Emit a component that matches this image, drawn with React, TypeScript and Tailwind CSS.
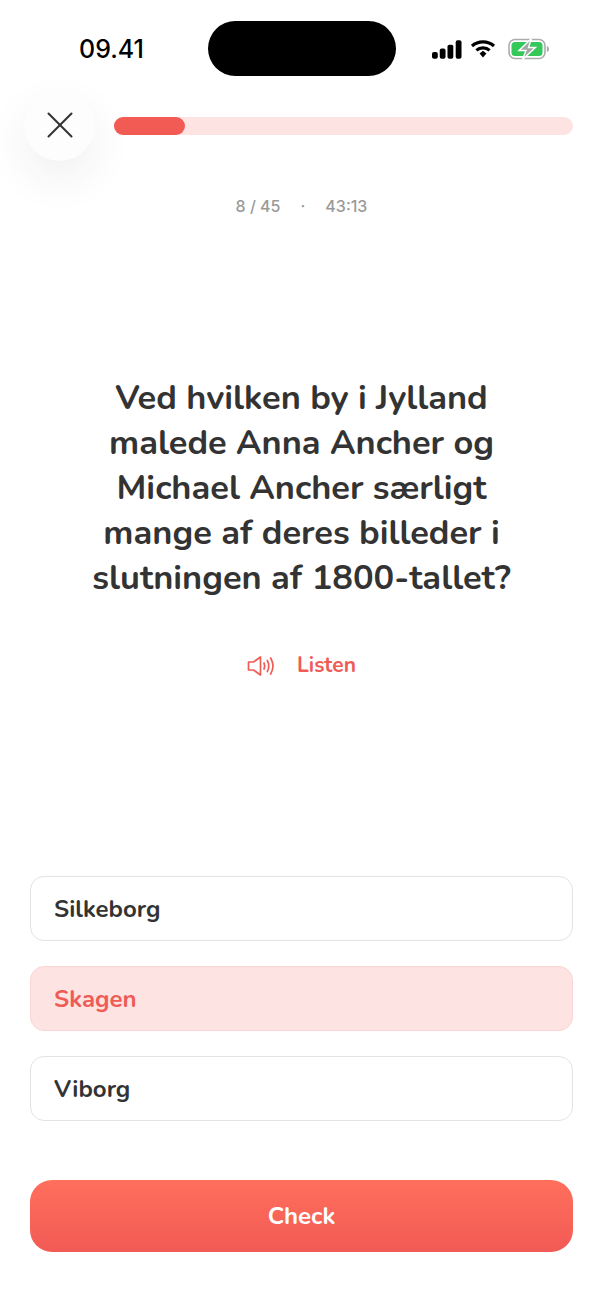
import React from 'react';
import { X } from 'lucide-react';

const answers = [
  { label: 'Silkeborg', active: false },
  { label: 'Skagen', active: true },
  { label: 'Viborg', active: false },
];

const StatusIcons = () => (
  <div className="flex items-center gap-[8px]">
    <svg width="30" height="19" viewBox="0 0 31 19" fill="#000">
      <rect x="0" y="12" width="6" height="7" rx="2" />
      <rect x="8" y="8.5" width="6" height="10.5" rx="2" />
      <rect x="16" y="4.5" width="6" height="14.5" rx="2" />
      <rect x="24.5" y="0" width="6" height="19" rx="2" />
    </svg>
    <svg width="26" height="20" viewBox="0 0 26 20" fill="none" stroke="#000" strokeWidth="3.2">
      <path d="M2 7 C8 1.4 18 1.4 24 7" />
      <path d="M6.4 11.4 C10 8 16 8 19.6 11.4" />
      <path d="M9.6 14.6 L13 11.8 L16.4 14.6 L13 18.4 Z" fill="#000" stroke="none" />
    </svg>
    <svg width="42" height="22" viewBox="0 0 42 22" className="ml-[4px]">
      <rect x="1" y="1.5" width="36" height="19" rx="6" fill="none" stroke="#a9aeaa" strokeWidth="1.6" />
      <rect x="3.5" y="4" width="31" height="14" rx="3.5" fill="#34c759" />
      <path d="M38.8 8 C40.5 8.5 41 9.5 41 11 C41 12.5 40.5 13.5 38.8 14 Z" fill="#a9aeaa" />
      <path d="M23.5 0.5 L11 12.5 H18 L14.5 21.5 L27.5 9.5 H20.5 Z" fill="#a4a6a5" stroke="#fff" strokeWidth="1.4" />
    </svg>
  </div>
);

const SpeakerIcon = () => (
  <svg width="28" height="22" viewBox="0 0 28 22" fill="none" stroke="#ee5c56" strokeWidth="1.7" strokeLinecap="round" strokeLinejoin="round">
    <path d="M1.5 7 H6.5 L13.5 2 V20 L6.5 15 H1.5 Z" />
    <path d="M17 8 C18 10 18 12 17 14" />
    <path d="M20.3 5.5 C22.2 9 22.2 13 20.3 16.5" />
    <path d="M23.6 3 C26.6 8 26.6 14 23.6 19" />
  </svg>
);

export default function App() {
  return (
    <div className="w-[603px] h-[1311px] bg-white flex flex-col overflow-hidden font-['Nunito','Noto_Sans',sans-serif]">
      {/* Status bar */}
      <div className="h-[90px] pt-[21px] pl-[79px] pr-[53px] flex items-start shrink-0">
        <span className="w-[129px] h-[57px] flex items-center font-['Inter',sans-serif] font-medium text-[25px] text-black">09.41</span>
        <div className="w-[188px] h-[55px] rounded-[28px] bg-black" />
        <div className="ml-auto h-[56px] flex items-center">
          <StatusIcons />
        </div>
      </div>

      {/* Progress */}
      <div className="pl-[24px] pr-[30px] flex items-center gap-[19px] shrink-0">
        <button className="w-[71px] h-[71px] rounded-full bg-[#fdfdfd] flex items-center justify-center shadow-[0_18px_44px_rgba(40,40,40,0.07)]">
          <X size={46} strokeWidth={1.05} color="#333333" className="-mt-[1px]" />
        </button>
        <div className="flex-1 h-[18px] rounded-full bg-[#fde4e2]">
          <div className="w-[71px] h-full rounded-full bg-[#f25a54]" />
        </div>
      </div>

      <div className="mt-[35px] h-[20px] flex items-center justify-center font-['Inter',sans-serif] font-medium text-[16px] text-[#9a9a9a]">
        <span>8 / 45</span>
        <span className="mx-[20px]">·</span>
        <span>43:13</span>
      </div>

      {/* Question */}
      <h1 className="mt-[159px] px-[85px] text-center font-bold text-[34.4px] leading-[45px] text-[#333333]">
        Ved hvilken by i Jylland malede Anna Ancher og Michael Ancher særligt mange af deres billeder i slutningen af 1800-tallet?
      </h1>

      <div className="mt-[52px] h-[28px] flex items-center justify-center gap-[22px]">
        <SpeakerIcon />
        <span className="font-bold text-[21px] text-[#ee5c56]">Listen</span>
      </div>

      {/* Answers */}
      <div className="mt-[196px] px-[30px] flex flex-col gap-[25px]">
        {answers.map((a) => (
          <div
            key={a.label}
            className={
              a.active
                ? 'h-[65px] px-[23px] flex items-center rounded-[14px] border-[1.5px] border-[#fbd5d3] bg-[#fde3e2] font-bold text-[24px] text-[#ee5c56]'
                : 'h-[65px] px-[23px] flex items-center rounded-[14px] border-[1.5px] border-[#e3e3e3] bg-white font-bold text-[24px] text-[#333333]'
            }
          >
            {a.label}
          </div>
        ))}
      </div>

      <div className="mt-[59px] px-[30px]">
        <button className="w-full h-[72px] rounded-[22px] bg-gradient-to-b from-[#ff6f5c] to-[#f25a55] font-bold text-[24px] text-white">
          Check
        </button>
      </div>
    </div>
  );
}
